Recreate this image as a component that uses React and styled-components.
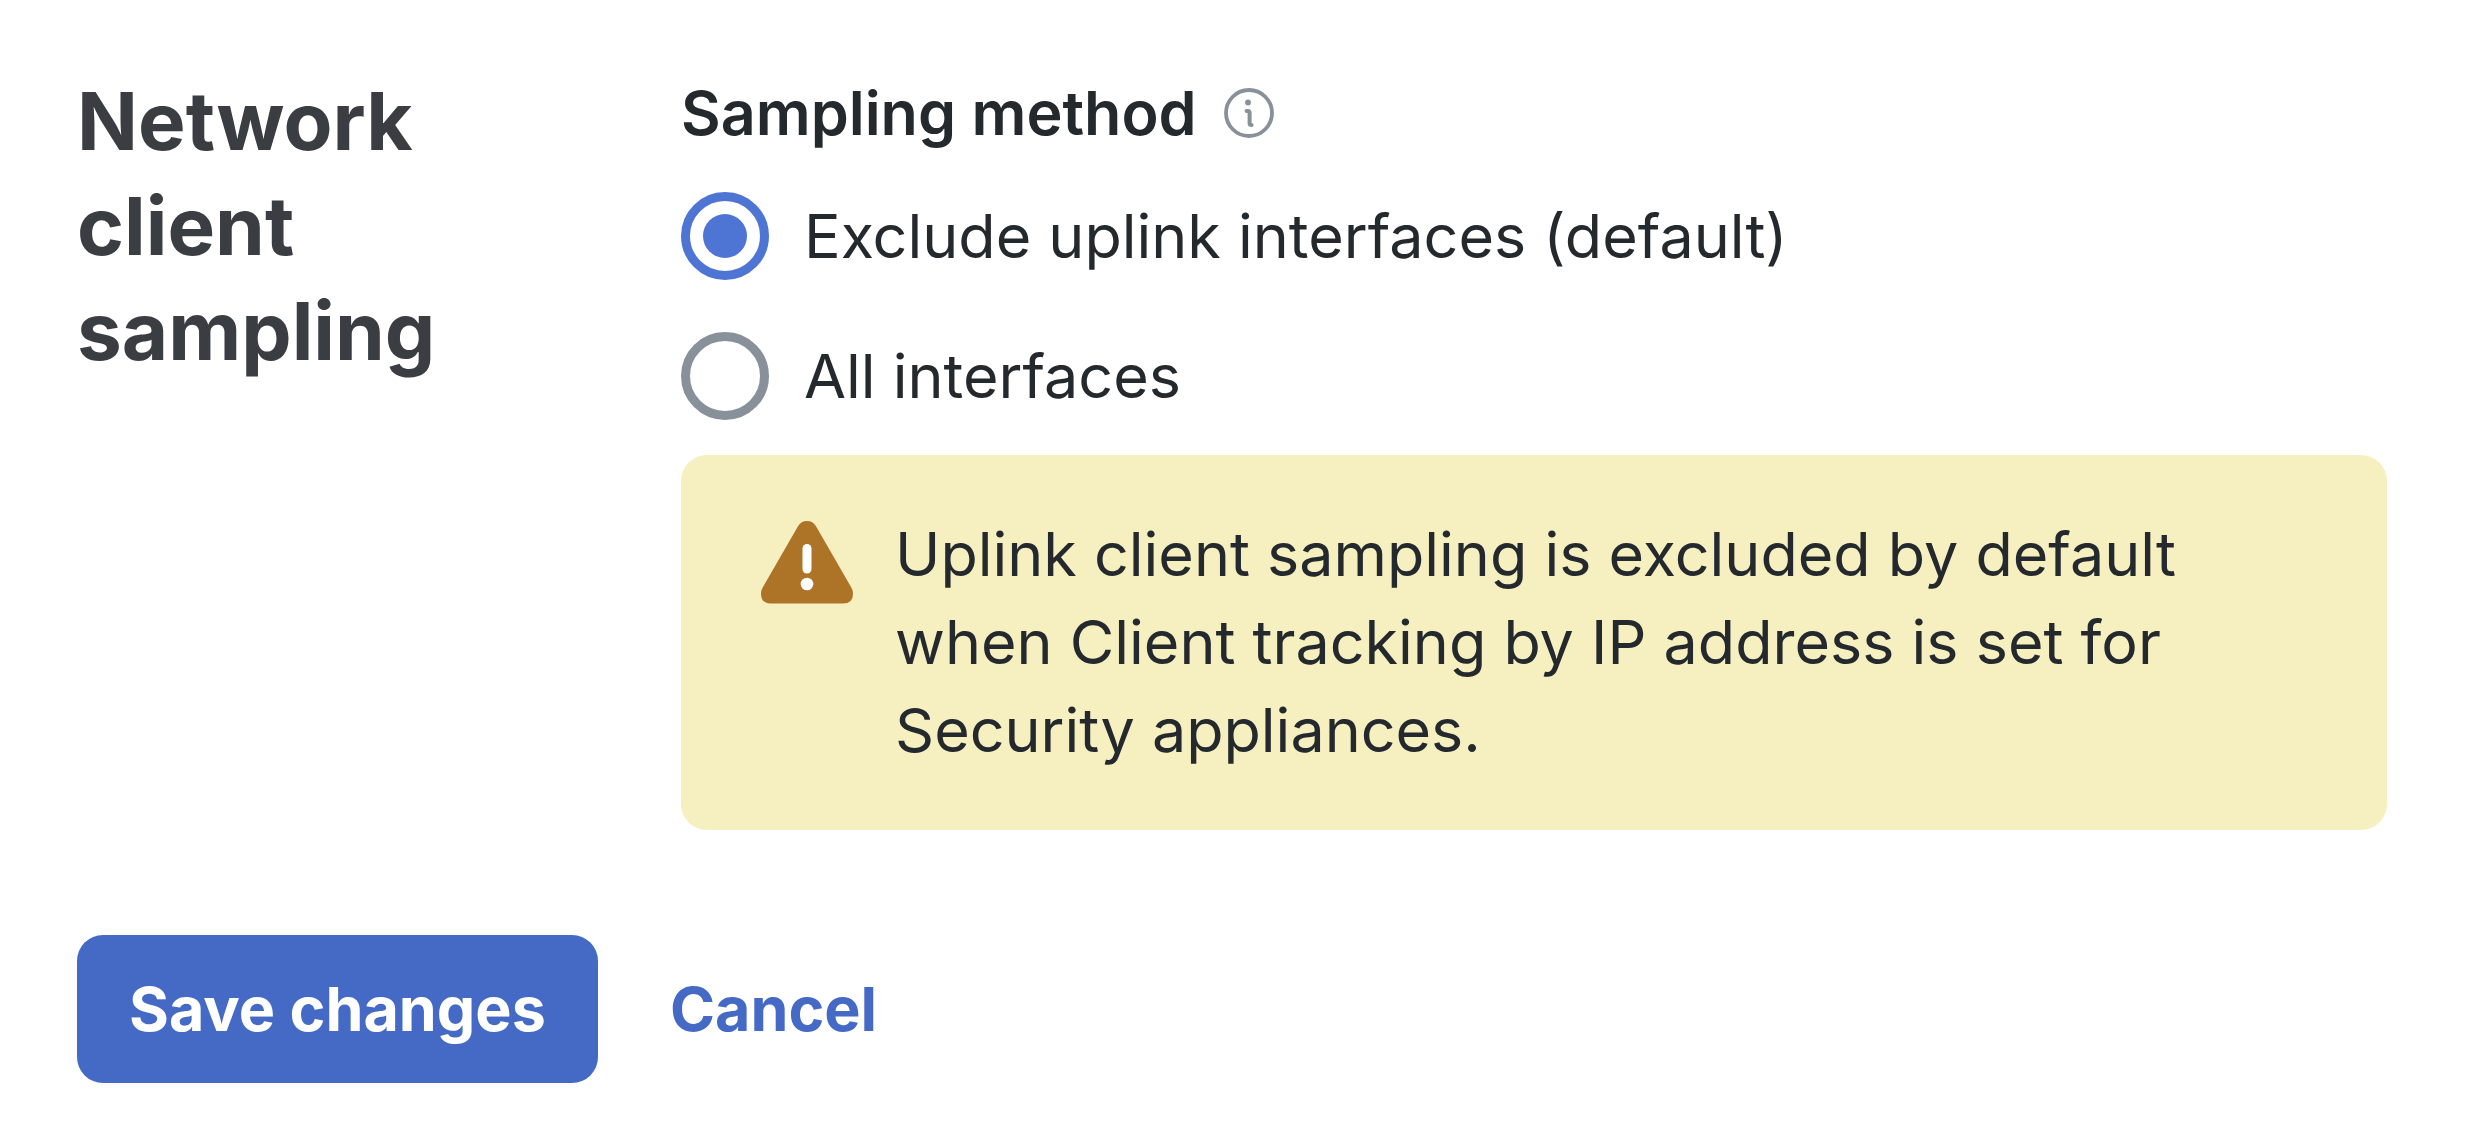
import React, { useState } from 'react';
import styled, { createGlobalStyle } from 'styled-components';

const METHODS = [
    { value: 'exclude', label: 'Exclude uplink interfaces (default)' },
    { value: 'all', label: 'All interfaces' },
];

const App = () => {
    const [method, setMethod] = useState('exclude');

    const handleSubmit = (e) => {
        e.preventDefault();
    };

    return (
        <>
            <GlobalStyle />
            <Form onSubmit={handleSubmit}>
                <Section>
                    <Title>Network client sampling</Title>
                    <Content>
                        <LabelRow>
                            <Label id="sampling-method">Sampling method</Label>
                            <InfoButton type="button" aria-label="Info">
                                <InfoIcon />
                            </InfoButton>
                        </LabelRow>
                        <Options
                            role="radiogroup"
                            aria-labelledby="sampling-method"
                        >
                            {METHODS.map(({ value, label }) => (
                                <Option key={value}>
                                    <Radio
                                        type="radio"
                                        name="method"
                                        value={value}
                                        checked={method === value}
                                        onChange={() => setMethod(value)}
                                    />
                                    {label}
                                </Option>
                            ))}
                        </Options>
                        <Alert>
                            <WarningIcon />
                            <AlertText>
                                Uplink client sampling is excluded by default
                                when Client tracking by IP address is set for
                                Security appliances.
                            </AlertText>
                        </Alert>
                    </Content>
                </Section>
                <Actions>
                    <Button type="submit" $primary>
                        Save changes
                    </Button>
                    <Button type="button">Cancel</Button>
                </Actions>
            </Form>
        </>
    );
};

const InfoIcon = () => (
    <svg width="50" height="50" viewBox="0 0 50 50" fill="none">
        <circle cx="25" cy="25" r="23" stroke="#889099" strokeWidth="3.8" />
        <circle cx="24" cy="14.5" r="2.9" fill="#889099" />
        <path
            d="M22.6 23h1.2q1.8 0 1.8 1.8v10.4q0 1.8 1.8 1.8h.2"
            stroke="#889099"
            strokeWidth="4"
            strokeLinecap="round"
        />
    </svg>
);

const WarningIcon = () => (
    <AlertSvg viewBox="0 0 92 83" aria-hidden="true">
        <path
            d="M37 5.2Q40 0 46 0t9 5.2L90.6 67Q92 69.4 92 73q0 9.5-10 9.5H10Q0 82.5 0 73q0-3.6 1.4-6z"
            fill="#ad7428"
        />
        <rect x="41.5" y="23" width="9" height="29.5" rx="4.5" fill="#fff" />
        <circle cx="46" cy="63" r="6.3" fill="#fff" />
    </AlertSvg>
);

export default App;

const GlobalStyle = createGlobalStyle`
    * {
        box-sizing: border-box;
    }

    body {
        margin: 0;
        background: #fff;
        color: #24292e;
        font-family: Inter, 'Liberation Sans', sans-serif;
        font-size: 61px;
        line-height: 88px;
    }
`;

const Form = styled.form`
    padding: 68px 87px 60px 77px;
`;

const Section = styled.section`
    display: flex;
    gap: 184px;
`;

const Title = styled.h2`
    flex: 0 0 420px;
    margin: 0;
    color: #3a3d42;
    font-size: 80px;
    font-weight: 700;
    line-height: 105px;
`;

const Content = styled.div`
    flex: 1;
    min-width: 0;
`;

const LabelRow = styled.div`
    display: flex;
    align-items: center;
    gap: 27px;
    min-height: 90px;
`;

const Label = styled.span`
    font-weight: 600;
`;

const InfoButton = styled.button`
    display: flex;
    padding: 0;
    border: 0;
    background: none;
    cursor: pointer;
`;

const Options = styled.div`
    display: flex;
    flex-direction: column;
    gap: 52px;
    margin: 34px 0 35px;
`;

const Option = styled.label`
    display: flex;
    align-items: center;
    gap: 35px;
    cursor: pointer;
`;

const Radio = styled.input`
    appearance: none;
    display: grid;
    place-items: center;
    flex: none;
    width: 88px;
    height: 88px;
    margin: 0;
    border: 9px solid #889099;
    border-radius: 50%;
    background: #fff;

    &:checked {
        border-color: #4e75d3;
    }

    &:checked::before {
        content: '';
        width: 44px;
        height: 44px;
        border-radius: 50%;
        background: #4e75d3;
    }
`;

const Alert = styled.div`
    display: flex;
    align-items: flex-start;
    gap: 42px;
    padding: 55px 80px 56px;
    border-radius: 26px;
    background: #f6efbf;
`;

const AlertSvg = styled.svg`
    flex: none;
    width: 92px;
    height: 83px;
    margin-top: 11px;
`;

const AlertText = styled.p`
    max-width: 1360px;
    margin: 0;
`;

const Actions = styled.div`
    display: flex;
    gap: 20px;
    margin-top: 105px;
`;

const Button = styled.button`
    padding: 30px 52px;
    border: 0;
    border-radius: 26px;
    background: ${({ $primary }) => ($primary ? '#456ac6' : 'transparent')};
    color: ${({ $primary }) => ($primary ? '#fff' : '#456ac6')};
    font: inherit;
    font-weight: 700;
    cursor: pointer;
`;
